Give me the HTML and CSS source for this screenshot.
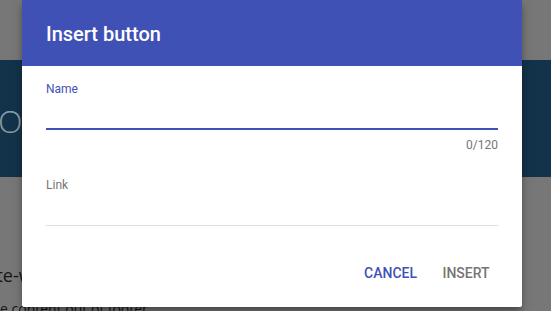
FILE: index.html
```html
<!DOCTYPE html>
<html lang="en">
<head>
<meta charset="utf-8">
<title>Insert button</title>
<link rel="stylesheet" href="styles.css">
</head>
<body>
  <div class="page">
    <div class="topbar"></div>
    <div class="hero"><span class="hero-title">O</span></div>
    <div class="content">
      <p class="lead">Site-wide</p>
      <p class="small">e content out of footer</p>
    </div>
  </div>

  <div class="dialog" role="dialog" aria-labelledby="dlg-title">
    <div class="dialog-header" id="dlg-title">Insert button</div>
    <div class="dialog-body">
      <label class="field">
        <span class="field-label active">Name</span>
        <input class="field-input focused" type="text" maxlength="120">
      </label>
      <div class="counter">0/120</div>
      <label class="field field-link">
        <span class="field-label">Link</span>
        <input class="field-input" type="text">
      </label>
    </div>
    <div class="actions">
      <button class="btn primary" type="button">Cancel</button>
      <button class="btn disabled" type="button">Insert</button>
    </div>
  </div>
</body>
</html>
```

FILE: styles.css
```css
* { box-sizing: border-box; }

html, body {
  margin: 0;
  padding: 0;
  height: 100%;
  overflow: hidden;
}

body {
  background: #777777;
  font-family: "Open Sans", "Liberation Sans", sans-serif;
}

.page {
  display: flex;
  flex-direction: column;
}

.topbar {
  height: 60px;
  background: #777777;
}

.hero {
  height: 117px;
  background: #13334a;
  padding-top: 41px;
}

.hero-title {
  display: block;
  margin-left: -2px;
  font-size: 32px;
  line-height: 40px;
  font-weight: 300;
  color: #8f9ca6;
}

.content {
  background: #777777;
  padding-top: 86px;
  color: #161616;
}

.lead {
  margin: 0 0 0 -18px;
  font-size: 18px;
  line-height: 24px;
}

.small {
  margin: 12px 0 0 0;
  font-size: 14px;
  line-height: 20px;
}

/* dialog */
.dialog {
  position: absolute;
  left: 22px;
  top: 0;
  width: 500px;
  background: #ffffff;
  border-radius: 0 0 2px 2px;
  font-family: Roboto, "Liberation Sans", sans-serif;
  box-shadow: 0 5px 6px -1px rgba(0, 0, 0, 0.35), 0 2px 14px rgba(0, 0, 0, 0.12);
}

.dialog-header {
  background: #3f51b5;
  color: #ffffff;
  padding: 22px 24px 20px;
  font-size: 20px;
  line-height: 24px;
  font-weight: 500;
}

.dialog-body {
  padding: 15px 24px 0;
}

.field {
  display: block;
}

.field-label {
  display: block;
  font-size: 12px;
  line-height: 16px;
  color: #757575;
}

.field-label.active {
  color: #3f51b5;
}

.field-input {
  display: block;
  width: 100%;
  height: 33px;
  padding: 0;
  margin: 0;
  border: 0;
  border-bottom: 1px solid #e0e0e0;
  background: transparent;
  outline: none;
  font-family: Roboto, "Liberation Sans", sans-serif;
  font-size: 16px;
  color: #212121;
}

.field-input.focused {
  border-bottom: 2px solid #3f51b5;
}

.counter {
  margin-top: 7px;
  text-align: right;
  font-size: 12px;
  line-height: 16px;
  color: #757575;
}

.field-link {
  margin-top: 24px;
}

.actions {
  display: flex;
  justify-content: flex-end;
  gap: 9px;
  padding: 29px 24px 16px;
}

.btn {
  min-width: 64px;
  height: 36px;
  padding: 0 8px;
  border: 0;
  border-radius: 2px;
  background: transparent;
  font-family: Roboto, "Liberation Sans", sans-serif;
  font-size: 14px;
  font-weight: 500;
  line-height: 36px;
  text-transform: uppercase;
  cursor: pointer;
}

.btn.primary {
  color: #3f51b5;
}

.btn.disabled {
  color: #757575;
}
```
